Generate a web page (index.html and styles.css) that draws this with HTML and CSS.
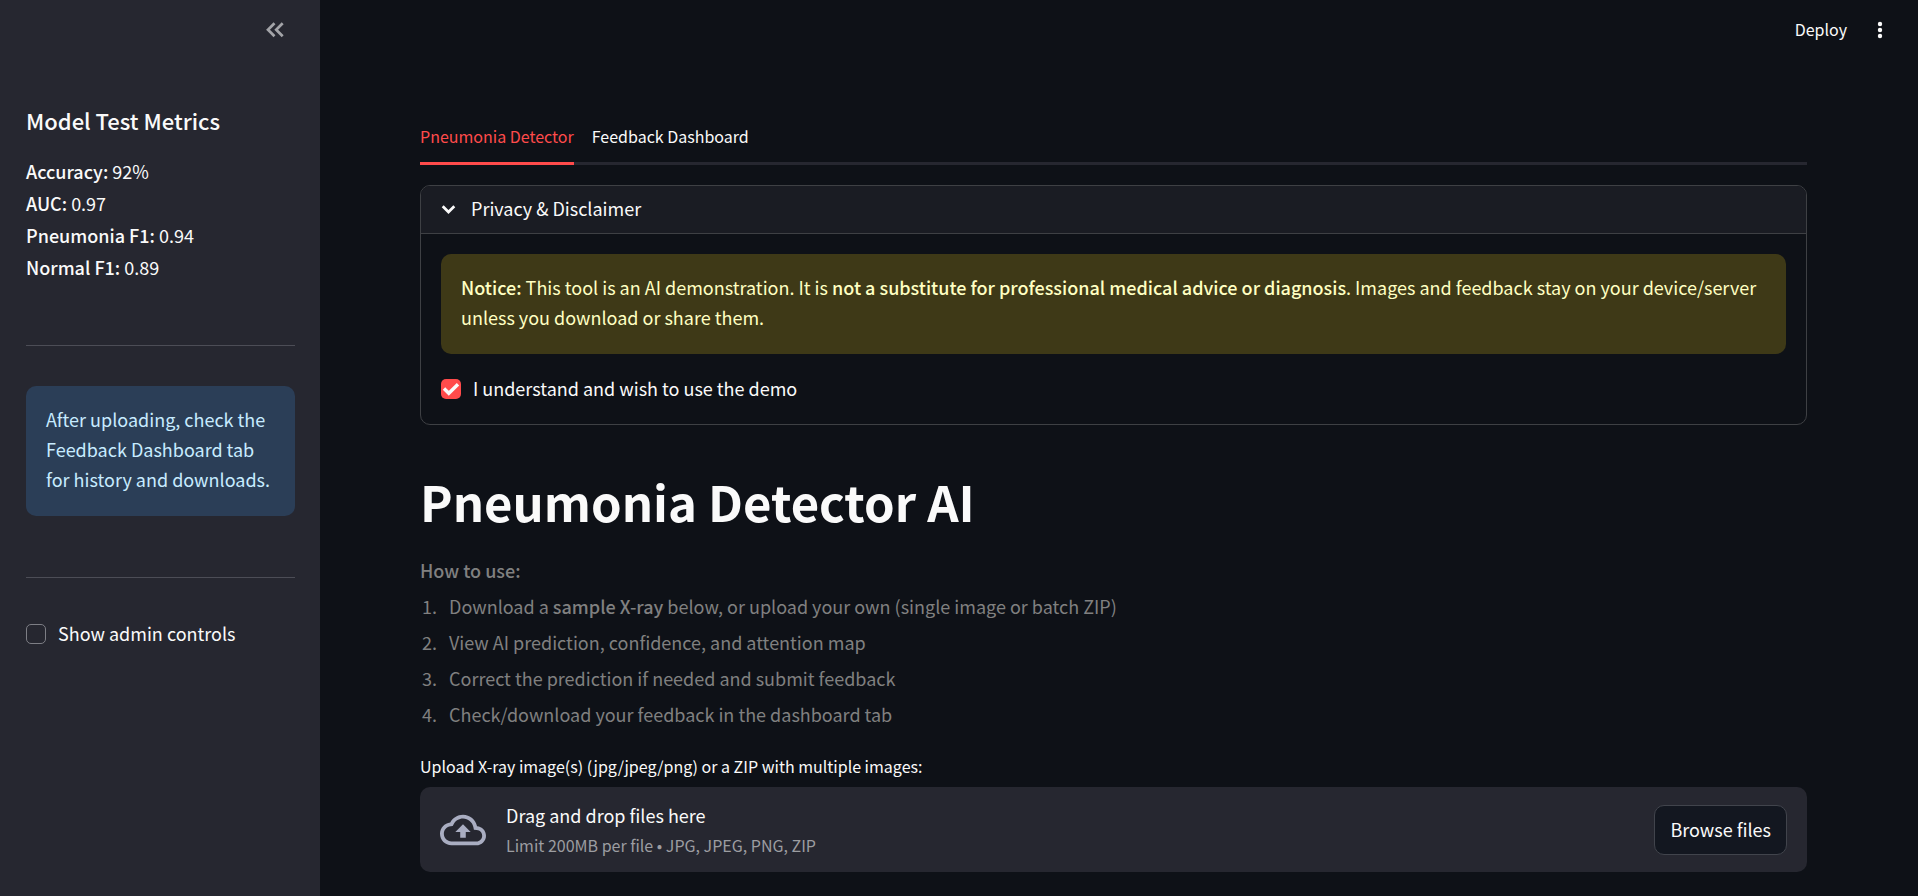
FILE: index.html
```html
<!DOCTYPE html>
<html lang="en">
<head>
<meta charset="utf-8">
<meta name="viewport" content="width=device-width, initial-scale=1">
<title>Pneumonia Detector AI</title>
<link rel="stylesheet" href="styles.css">
</head>
<body>
<div class="app">
  <aside class="sidebar">
    <div class="sidebar-header">
      <button class="icon-button" type="button" aria-label="Collapse sidebar">
        <svg viewBox="0 0 25 25" width="25" height="25"><path d="M12.500 6.200 6 12.700 12.500 19.200M20.700 6.200 14.200 12.700 20.700 19.200" fill="none" stroke="currentColor" stroke-width="2.700"/></svg>
      </button>
    </div>
    <h3 class="sidebar-title">Model Test Metrics</h3>
    <div class="metrics">
      <div><strong>Accuracy:</strong> 92%</div>
      <div><strong>AUC:</strong> 0.97</div>
      <div><strong>Pneumonia F1:</strong> 0.94</div>
      <div><strong>Normal F1:</strong> 0.89</div>
    </div>
    <hr class="divider">
    <div class="alert info">After uploading, check the Feedback Dashboard tab for history and downloads.</div>
    <hr class="divider">
    <label class="check"><input type="checkbox">Show admin controls</label>
  </aside>

  <div class="content">
    <header class="toolbar">
      <button class="deploy" type="button">Deploy</button>
      <button class="icon-button menu" type="button" aria-label="Main menu">
        <svg viewBox="0 0 20 20" width="20" height="20" fill="currentColor"><circle cx="10" cy="4" r="2.200"/><circle cx="10" cy="10" r="2.200"/><circle cx="10" cy="16" r="2.200"/></svg>
      </button>
    </header>

    <main class="main">
      <div class="tabs" role="tablist">
        <button class="tab active" type="button" role="tab" aria-selected="true">Pneumonia Detector</button>
        <button class="tab" type="button" role="tab" aria-selected="false">Feedback Dashboard</button>
      </div>

      <details class="expander" open>
        <summary>
          <svg viewBox="0 0 25 25" width="25" height="25"><path d="M6.700 9.200 12.500 15 18.300 9.200" fill="none" stroke="currentColor" stroke-width="2.700"/></svg>
          <span class="summary-text">Privacy &amp; Disclaimer</span>
        </summary>
        <div class="expander-body">
          <div class="alert warning"><strong>Notice:</strong> This tool is an AI demonstration. It is <strong>not a substitute for professional medical advice or diagnosis</strong>. Images and feedback stay on your device/server unless you download or share them.</div>
          <label class="check"><input type="checkbox" checked>I understand and wish to use the demo</label>
        </div>
      </details>

      <h1 class="title">Pneumonia Detector AI</h1>

      <div class="howto">
        <strong>How to use:</strong>
        <ol>
          <li>Download a <strong>sample X-ray</strong> below, or upload your own (single image or batch ZIP)</li>
          <li>View AI prediction, confidence, and attention map</li>
          <li>Correct the prediction if needed and submit feedback</li>
          <li>Check/download your feedback in the dashboard tab</li>
        </ol>
      </div>

      <div class="upload-label" id="upload-label">Upload X-ray image(s) (jpg/jpeg/png) or a ZIP with multiple images:</div>
      <section class="dropzone" aria-labelledby="upload-label">
        <svg class="cloud" viewBox="0 0 24 24" width="46" height="46" fill="currentColor"><path d="M19.350 10.040C18.670 6.590 15.640 4 12 4 9.110 4 6.600 5.640 5.350 8.040 2.340 8.360 0 10.910 0 14c0 3.310 2.690 6 6 6h13c2.760 0 5-2.240 5-5 0-2.640-2.050-4.780-4.650-4.960zM19 18H6c-2.210 0-4-1.790-4-4 0-2.050 1.530-3.760 3.560-3.970l1.070-.110.500-.950C8.080 7.140 9.940 6 12 6c2.620 0 4.880 1.860 5.390 4.430l.300 1.500 1.530.110c1.560.100 2.780 1.410 2.780 2.960 0 1.650-1.350 3-3 3zM8 13h2.550v3h2.900v-3H16l-4-4z"/></svg>
        <div class="drop-text">
          <span>Drag and drop files here</span>
          <small>Limit 200MB per file • JPG, JPEG, PNG, ZIP</small>
        </div>
        <button class="browse" type="button">Browse files</button>
      </section>
    </main>
  </div>
</div>
</body>
</html>
```
FILE: styles.css
```css
* {
  box-sizing: border-box;
}

body {
  margin: 0;
  background: #0e1117;
  color: #fafafa;
  font: 18px/30px "Noto Sans CJK JP", "Noto Sans", sans-serif;
}

strong {
  font-weight: 500;
}

button {
  margin: 0;
  padding: 0;
  border: 0;
  background: none;
  color: inherit;
  font: inherit;
  cursor: pointer;
}

svg {
  display: block;
  flex: none;
}

.app {
  display: flex;
  height: 100vh;
  overflow: hidden;
}

/* Sidebar */
.sidebar {
  flex: none;
  width: 320px;
  padding: 0 25px 0 26px;
  background: #262730;
}

.sidebar-header {
  display: flex;
  justify-content: flex-end;
  padding: 17px 8px 0 0;
  margin-bottom: 63px;
}

.icon-button {
  color: #a3a4a8;
}

.sidebar-title {
  margin: 0 0 20px;
  font-size: 22px;
  font-weight: 500;
  line-height: 30px;
}

.metrics {
  margin-bottom: 62px;
  line-height: 32px;
}

.divider {
  height: 1px;
  margin: 61px 0 40px;
  border: 0;
  background: #4c4d56;
}

.metrics + .divider {
  margin-top: 0;
}

.alert {
  padding: 18px 20px 22px;
  border-radius: 10px;
}

.info {
  background: #2b3e57;
  color: #c7ebff;
}

.warning {
  background: #3e3917;
  color: #ffffc2;
}

.check {
  display: flex;
  align-items: center;
  gap: 12px;
}

.check input {
  appearance: none;
  flex: none;
  width: 20px;
  height: 20px;
  margin: 2px 0 0;
  border: 1px solid #7d7e85;
  border-radius: 5px;
}

.check input:checked {
  border: 0;
  background: #ff4b4b url("data:image/svg+xml,%3Csvg xmlns='http://www.w3.org/2000/svg' viewBox='0 0 20 20'%3E%3Cpath d='M3 9.500 7.800 14.300 17 5.200' fill='none' stroke='%23fafafa' stroke-width='3.400'/%3E%3C/svg%3E");
}

/* Main area */
.content {
  flex: 1;
  min-width: 0;
}

.toolbar {
  display: flex;
  align-items: center;
  justify-content: flex-end;
  gap: 23px;
  height: 60px;
  padding-right: 28px;
}

.deploy {
  padding-bottom: 2px;
  font-size: 16px;
}

.menu {
  color: #fafafa;
}

.main {
  padding: 52px 111px 24px 100px;
}

.tabs {
  display: flex;
  gap: 18px;
  border-bottom: 3px solid #262730;
}

.tab {
  height: 53px;
  padding-bottom: 3px;
  margin-bottom: -3px;
  border-bottom: 3px solid transparent;
  font-size: 16px;
}

.active {
  border-color: #ff4b4b;
  color: #ff4b4b;
}

.expander {
  margin-top: 20px;
  border: 1px solid #3e4044;
  border-radius: 10px;
  overflow: hidden;
}

.expander summary {
  display: flex;
  align-items: center;
  gap: 10px;
  height: 48px;
  padding: 0 15px;
  border-bottom: 1px solid #3e4044;
  background: #1a1c23;
  cursor: pointer;
}

.summary-text {
  padding-bottom: 4px;
}

.expander-body {
  padding: 20px;
}

.expander .check {
  margin: 19px 0 1px;
}

.title {
  margin: 43px 0 0;
  font-size: 49px;
  line-height: 66px;
}

.howto {
  margin-top: 21px;
  color: #808080;
}

.howto ol {
  margin: 3px 0 0;
  padding-left: 29px;
}

.howto li {
  line-height: 36px;
}

.howto li::marker {
  content: counter(list-item) ".\a0\a0\a0";
}

.upload-label {
  margin: 19px 0 6px;
  font-size: 16px;
}

.dropzone {
  display: flex;
  align-items: center;
  gap: 20px;
  height: 85px;
  padding: 0 20px;
  border-radius: 10px;
  background: #262730;
}

.cloud {
  color: #a9adc1;
}

.drop-text {
  display: flex;
  flex: 1;
  flex-direction: column;
}

.drop-text small {
  color: #9c9da1;
  font-size: 16px;
}

.browse {
  height: 50px;
  padding: 0 15px 2px;
  border: 1px solid #41444c;
  border-radius: 10px;
  background: #131720;
}
```
